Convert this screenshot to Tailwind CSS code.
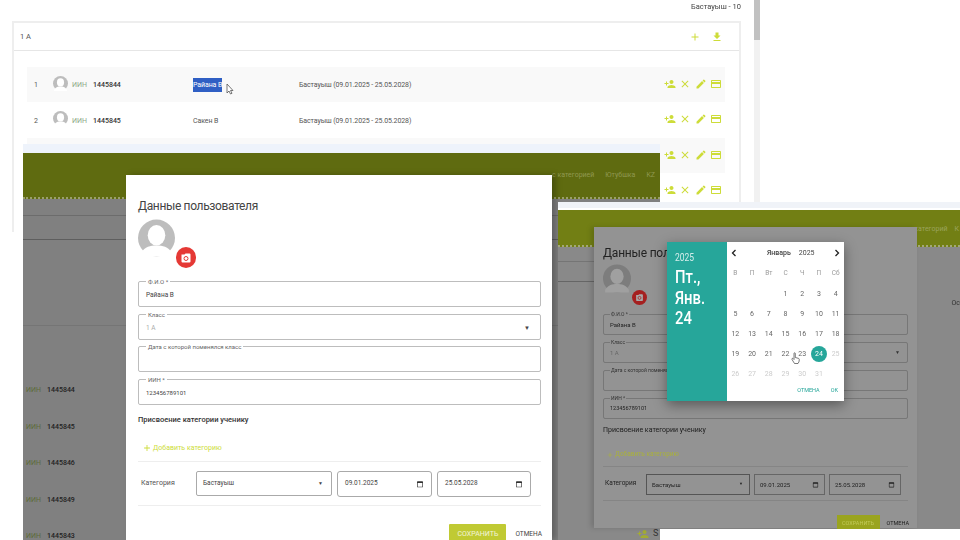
<!DOCTYPE html>
<html lang="ru">
<head>
  <meta charset="UTF-8" />
  <meta name="viewport" content="width=device-width, initial-scale=1.0"/>
  <title>Данные пользователя</title>
  <script src="https://cdn.jsdelivr.net/npm/@tailwindcss/browser@4"></script>
</head>
<body class="bg-white overflow-hidden font-['Roboto',sans-serif]">

<svg class="hidden">
  <symbol id="i-add-user" viewBox="0 0 24 24"><path d="M15 12c2.21 0 4-1.79 4-4s-1.79-4-4-4-4 1.79-4 4 1.79 4 4 4zm-9-2V7H4v3H1v2h3v3h2v-3h3v-2H6zm9 4c-2.67 0-8 1.34-8 4v2h16v-2c0-2.66-5.33-4-8-4z"/></symbol>
  <symbol id="i-close" viewBox="0 0 24 24"><path d="M19 6.41L17.59 5 12 10.59 6.41 5 5 6.41 10.59 12 5 17.59 6.41 19 12 13.41 17.59 19 19 17.59 13.41 12z"/></symbol>
  <symbol id="i-edit" viewBox="0 0 24 24"><path d="M3 17.25V21h3.75L17.81 9.94l-3.75-3.75L3 17.25zM20.71 7.04c.39-.39.39-1.02 0-1.41l-2.34-2.34c-.39-.39-1.02-.39-1.41 0l-1.83 1.83 3.75 3.75 1.83-1.83z"/></symbol>
  <symbol id="i-card" viewBox="0 0 24 24"><path d="M20 4H4c-1.11 0-1.99.89-1.99 2L2 18c0 1.11.89 2 2 2h16c1.11 0 2-.89 2-2V6c0-1.11-.89-2-2-2zm0 14H4v-6h16v6zm0-10H4V6h16v2z"/></symbol>
  <symbol id="i-download" viewBox="0 0 24 24"><path d="M19 9h-4V3H9v6H5l7 7 7-7zM5 18v2h14v-2H5z"/></symbol>
  <symbol id="i-plus" viewBox="0 0 24 24"><path d="M19 13h-6v6h-2v-6H5v-2h6V5h2v6h6v2z"/></symbol>
  <symbol id="i-cal" viewBox="0 0 24 24"><path d="M19 4H5a2 2 0 0 0-2 2v14a2 2 0 0 0 2 2h14a2 2 0 0 0 2-2V6a2 2 0 0 0-2-2zm0 16H5V9h14v11z"/></symbol>
  <symbol id="i-avatar" viewBox="0 0 40 40"><circle cx="20" cy="20" r="20" fill="#bdbdbd"/><ellipse cx="20" cy="17" rx="9.5" ry="11" fill="#fff"/><path d="M3 36c5-7 10-8 17-8s12 1 17 8v4H3z" fill="#fff"/></symbol>
  <symbol id="i-avatar-dim" viewBox="0 0 40 40"><circle cx="20" cy="20" r="20" fill="#7d7d7d"/><ellipse cx="20" cy="17" rx="9.5" ry="11" fill="#a0a0a0"/><path d="M3 36c5-7 10-8 17-8s12 1 17 8v4H3z" fill="#a0a0a0"/></symbol>
</svg>

<div class="relative w-[960px] h-[540px] overflow-hidden blur-[0.5px]">

  <!-- main page behind -->
  <div class="absolute right-[219px] top-[1px] text-[7.500px] leading-[12px] text-[#444]">Бастауыш - 10</div>
  <div class="absolute left-[754px] top-0 w-[6px] h-[202px] bg-[#f1f1f1]"><div class="h-[40px] bg-[#c1c1c1]"></div></div>

  <div class="absolute left-[12px] top-[21px] w-[729px] h-[211px] border-2 border-b-0 border-[#eeeeee] bg-white">
    <div class="h-[28px] flex items-center justify-between border-b border-[#e6e6e6] pl-[6px] pr-[16px] text-[7.500px] text-[#555]">
      <span>1 А</span>
      <div class="flex items-center gap-[10px] text-[#cddc39]">
        <svg class="w-[12px] h-[12px] fill-current"><use href="#i-plus"/></svg>
        <svg class="w-[12px] h-[12px] fill-current"><use href="#i-download"/></svg>
      </div>
    </div>
    <div class="pt-[16px] pl-[13px] pr-[14px] text-[7px] text-[#555]">
      <div class="h-[35px] pt-[2px] flex items-center bg-[#f9f9f9]">
        <span class="w-[26px] pl-[7px]">1</span>
        <svg class="w-[15px] h-[15px] mb-[5px]"><use href="#i-avatar"/></svg>
        <span class="ml-[4px] w-[21px] text-[#8fa98a]">ИИН</span>
        <span class="w-[100px] font-medium text-[#333]">1445844</span>
        <span class="w-[106px] tracking-[-0.1px]"><span class="bg-[#2f5fc4] text-white py-[3px]">Райана В</span></span>
        <span class="flex-1 tracking-[-0.1px]">Бастауыш (09.01.2025 - 25.05.2028)</span>
        <div class="flex items-center gap-[3.500px] pr-[3px] text-[#cddc39] -mt-[4px]">
          <svg class="w-[12px] h-[12px] fill-current"><use href="#i-add-user"/></svg>
          <svg class="w-[12px] h-[12px] fill-current"><use href="#i-close"/></svg>
          <svg class="w-[12px] h-[12px] fill-current"><use href="#i-edit"/></svg>
          <svg class="w-[12px] h-[12px] fill-current"><use href="#i-card"/></svg>
        </div>
      </div>
      <div class="h-[36px] pt-[2px] flex items-center">
        <span class="w-[26px] pl-[7px]">2</span>
        <svg class="w-[15px] h-[15px] mb-[5px]"><use href="#i-avatar"/></svg>
        <span class="ml-[4px] w-[21px] text-[#8fa98a]">ИИН</span>
        <span class="w-[100px] font-medium text-[#333]">1445845</span>
        <span class="w-[106px] tracking-[-0.1px]">Сакен В</span>
        <span class="flex-1 tracking-[-0.1px]">Бастауыш (09.01.2025 - 25.05.2028)</span>
        <div class="flex items-center gap-[3.500px] pr-[3px] text-[#cddc39] -mt-[4px]">
          <svg class="w-[12px] h-[12px] fill-current"><use href="#i-add-user"/></svg>
          <svg class="w-[12px] h-[12px] fill-current"><use href="#i-close"/></svg>
          <svg class="w-[12px] h-[12px] fill-current"><use href="#i-edit"/></svg>
          <svg class="w-[12px] h-[12px] fill-current"><use href="#i-card"/></svg>
        </div>
      </div>
      <div class="h-[35px] flex items-center justify-end bg-[#f9f9f9]">
        <div class="flex items-center gap-[3.500px] pr-[3px] text-[#cddc39] -mt-[2px]">
          <svg class="w-[12px] h-[12px] fill-current"><use href="#i-add-user"/></svg>
          <svg class="w-[12px] h-[12px] fill-current"><use href="#i-close"/></svg>
          <svg class="w-[12px] h-[12px] fill-current"><use href="#i-edit"/></svg>
          <svg class="w-[12px] h-[12px] fill-current"><use href="#i-card"/></svg>
        </div>
      </div>
      <div class="h-[35px] flex items-center justify-end">
        <div class="flex items-center gap-[3.500px] pr-[3px] text-[#cddc39] -mt-[2px]">
          <svg class="w-[12px] h-[12px] fill-current"><use href="#i-add-user"/></svg>
          <svg class="w-[12px] h-[12px] fill-current"><use href="#i-close"/></svg>
          <svg class="w-[12px] h-[12px] fill-current"><use href="#i-edit"/></svg>
          <svg class="w-[12px] h-[12px] fill-current"><use href="#i-card"/></svg>
        </div>
      </div>
    </div>
  </div>

  <!-- mouse pointer over the selected name -->
  <svg class="absolute left-[226px] top-[83px] w-[8px] h-[12px]" viewBox="0 0 8 12"><path d="M1 1v9l2-2 1.500 3 1.500-.7L4.500 7.500H7z" fill="#fff" stroke="#555" stroke-width=".8"/></svg>

  <div class="absolute left-[23px] top-[144px] w-[637px] h-[9px] bg-[#eef3fb]"></div>

  <!-- first window, dimmed by the dialog -->
  <div class="absolute left-[23px] top-[153px] w-[637px] h-[387px] bg-[#808080]">
    <div class="h-[46px] bg-[#5f6b10] border-b-2 border-dotted border-[#9a9f6a] flex justify-end items-center gap-[11px] pr-[5px] pt-[1px] text-[7px] text-[#8f9850]">
      <span>с категорией</span><span>Ютубшка</span><span>KZ</span>
    </div>
    <div class="h-[17px] border-b border-[#6c6c6c]"></div>
    <div class="h-[24px] border-b border-[#5e5e5e]"></div>
    <div class="h-[86px] border-b border-[#757575]"></div>
    <div class="pt-[60px] pl-[3px] flex flex-col gap-[27px] text-[7px] leading-[9.500px] font-medium text-[#222]">
      <div><span class="font-normal text-[#5d6b3a] mr-[6px]">ИИН</span>1445844</div>
      <div><span class="font-normal text-[#5d6b3a] mr-[6px]">ИИН</span>1445845</div>
      <div><span class="font-normal text-[#5d6b3a] mr-[6px]">ИИН</span>1445846</div>
      <div><span class="font-normal text-[#5d6b3a] mr-[6px]">ИИН</span>1445849</div>
      <div><span class="font-normal text-[#5d6b3a] mr-[6px]">ИИН</span>1445843</div>
    </div>
  </div>

  <!-- first dialog -->
  <div class="absolute left-[126px] top-[175px] w-[426px] h-[365px] bg-white shadow-[4px_0_6px_rgba(0,0,0,0.25)] px-[12px]">
    <h2 class="pt-[23px] text-[12px] leading-[16px] tracking-[-0.35px] text-[#444]">Данные пользователя</h2>
    <div class="relative h-[59px] mt-[5px]">
      <svg class="w-[37px] h-[38px]"><use href="#i-avatar"/></svg>
      <div class="absolute left-[38px] top-[28px] w-[20px] h-[21px] rounded-full bg-[#e53935] flex items-center justify-center">
        <svg class="w-[12px] h-[12px]" viewBox="0 0 24 24"><path d="M3 5h6l2-2h8a2 2 0 0 1 2 2v14a2 2 0 0 1-2 2H5a2 2 0 0 1-2-2z" fill="#fff"/><circle cx="12" cy="13" r="4" fill="none" stroke="#e53935" stroke-width="2"/></svg>
      </div>
    </div>
    <div class="w-[403px] flex flex-col gap-[3.500px]">
      <fieldset class="h-[29px] border border-[#bdbdbd] rounded-[2px] px-[7px]">
        <legend class="text-[6px] leading-[7px] px-[2px] text-[#666]">Ф.И.О *</legend>
        <div class="text-[6.500px] leading-[20px] text-[#444]">Райана В</div>
      </fieldset>
      <fieldset class="h-[29px] border border-[#bdbdbd] rounded-[2px] pl-[7px] pr-[10px]">
        <legend class="text-[6px] leading-[7px] px-[2px] text-[#666]">Класс</legend>
        <div class="flex items-center justify-between text-[6.500px] leading-[20px] text-[#aaa]"><span>1 А</span><span class="text-[6px] text-[#444]">▼</span></div>
      </fieldset>
      <fieldset class="h-[29px] border border-[#bdbdbd] rounded-[2px] px-[7px]">
        <legend class="text-[6px] leading-[7px] px-[2px] text-[#666]">Дата с которой поменялся класс</legend>
      </fieldset>
      <fieldset class="h-[29px] border border-[#bdbdbd] rounded-[2px] px-[7px]">
        <legend class="text-[6px] leading-[7px] px-[2px] text-[#666]">ИИН *</legend>
        <div class="text-[6px] leading-[20px] text-[#444]">123456789101</div>
      </fieldset>
    </div>
    <div class="pt-[10px] text-[7.500px] leading-[10px] font-medium text-[#333]">Присвоение категории ученику</div>
    <div class="pt-[18px] pl-[4px] pb-[8px] flex items-center gap-[1px] w-[403px] border-b border-[#eeeeee] text-[7px] leading-[10px] text-[#cddc39]">
      <svg class="w-[10px] h-[10px] fill-current"><use href="#i-plus"/></svg><span>Добавить категорию</span>
    </div>
    <div class="w-[403px] h-[44px] pt-[1px] flex items-center border-b border-[#eeeeee] text-[6.500px] text-[#444]">
      <span class="w-[58px] pl-[3px] text-[7px] text-[#555]">Категория</span>
      <div class="w-[136px] h-[25px] border border-[#aaa] rounded-[2px] flex items-center justify-between pl-[6px] pr-[8px]"><span>Бастауыш</span><span class="text-[5px]">▼</span></div>
      <div class="ml-[5px] w-[95px] h-[26px] border border-[#aaa] rounded-[3px] flex items-center justify-between pl-[7px] pr-[7px]"><span>09.01.2025</span><svg class="w-[8px] h-[8px] fill-[#333]"><use href="#i-cal"/></svg></div>
      <div class="ml-[5px] w-[94px] h-[26px] border border-[#aaa] rounded-[3px] flex items-center justify-between pl-[7px] pr-[7px]"><span>25.05.2028</span><svg class="w-[8px] h-[8px] fill-[#333]"><use href="#i-cal"/></svg></div>
    </div>
    <div class="w-[404px] pt-[18px] flex justify-end items-start gap-[9px]">
      <div class="w-[57px] h-[20px] rounded-[1px] bg-[#c0ca33] text-white/80 text-[7px] text-center leading-[20px]">СОХРАНИТЬ</div>
      <div class="pt-[5px] text-[6.500px] leading-[10px] text-[#444]">ОТМЕНА</div>
    </div>
  </div>

  <!-- second window, same page a step later -->
  <div class="absolute left-[558px] top-[202px] w-[402px] h-[338px] bg-[#898989]">
    <div class="h-[6px] bg-[#f0f3f8]"></div>
    <div class="h-[2px] bg-white"></div>
    <div class="h-[37px] bg-[#727f14] border-b-2 border-dotted border-[#a3a878] flex justify-end pr-[1px] pt-[14px] text-[7px] leading-[10px] text-[#9aa35c]">
      <span>т категорий</span><span class="ml-[7px]">К</span>
    </div>
    <div class="h-[15px] border-b border-[#757575] w-[36px]"></div>
    <div class="h-[20px] border-b border-[#666] w-[36px]"></div>
    <div class="absolute right-0 top-[96px] text-[7px] text-[#333]">Ос</div>
    <div class="absolute left-[79px] top-[325px] flex items-center gap-[3px] text-[9px] text-[#333]">
      <svg class="w-[12px] h-[12px] fill-[#a3ac33]"><use href="#i-add-user"/></svg><span class="ml-[1px]">S</span>
    </div>
  </div>

  <!-- second dialog, dimmed -->
  <div class="absolute left-[594px] top-[227px] w-[323px] h-[301px] bg-[#939393] px-[9px] shadow-[-3px_0_5px_rgba(0,0,0,0.15)]">
    <h2 class="pt-[18px] text-[12px] leading-[16px] tracking-[-0.2px] text-[#222]">Данные пользо</h2>
    <div class="relative h-[46px] mt-[3px]">
      <svg class="w-[28px] h-[29px]"><use href="#i-avatar-dim"/></svg>
      <div class="absolute left-[29px] top-[26px] w-[15px] h-[15px] rounded-full bg-[#a52020] flex items-center justify-center">
        <svg class="w-[9px] h-[9px]" viewBox="0 0 24 24"><path d="M3 5h6l2-2h8a2 2 0 0 1 2 2v14a2 2 0 0 1-2 2H5a2 2 0 0 1-2-2z" fill="#a9a9a9"/><circle cx="12" cy="13" r="4" fill="none" stroke="#a52020" stroke-width="2"/></svg>
      </div>
    </div>
    <div class="w-[305px] flex flex-col gap-[4px] mt-[1px]">
      <fieldset class="h-[24px] border border-[#777] rounded-[2px] px-[6px]">
        <legend class="text-[5px] leading-[6px] px-[1px] text-[#333]">Ф.И.О *</legend>
        <div class="text-[6px] leading-[15px] text-[#222]">Райана В</div>
      </fieldset>
      <fieldset class="h-[24px] border border-[#777] rounded-[2px] pl-[6px] pr-[7px]">
        <legend class="text-[5px] leading-[6px] px-[1px] text-[#333]">Класс</legend>
        <div class="flex items-center justify-between text-[6px] leading-[15px] text-[#666]"><span>1 А</span><span class="text-[5px] text-[#333]">▼</span></div>
      </fieldset>
      <fieldset class="h-[24px] border border-[#777] rounded-[2px] px-[6px]">
        <legend class="text-[5px] leading-[6px] px-[1px] text-[#333]">Дата с которой поменялся класс</legend>
      </fieldset>
      <fieldset class="h-[24px] border border-[#777] rounded-[2px] px-[6px]">
        <legend class="text-[5px] leading-[6px] px-[1px] text-[#333]">ИИН *</legend>
        <div class="text-[5.500px] leading-[15px] text-[#222]">123456789101</div>
      </fieldset>
    </div>
    <div class="pt-[7px] text-[7px] leading-[9px] text-[#1c1c1c]">Присвоение категории ученику</div>
    <div class="pt-[15px] pl-[3px] pb-[7px] flex items-center gap-[1px] w-[305px] border-b border-[#858585] text-[6.500px] leading-[9px] text-[#aab13c]">
      <svg class="w-[8px] h-[8px] fill-current"><use href="#i-plus"/></svg><span>Добавить категорию</span>
    </div>
    <div class="w-[305px] h-[34px] pt-[1px] flex items-center border-b border-[#858585] text-[6px] text-[#222]">
      <span class="w-[43px] pl-[2px] text-[6.500px]">Категория</span>
      <div class="w-[104px] h-[21px] border border-[#555] flex items-center justify-between pl-[5px] pr-[6px]"><span>Бастауыш</span><span class="text-[4px]">▼</span></div>
      <div class="ml-[4px] w-[71px] h-[21px] border border-[#666] flex items-center justify-between pl-[5px] pr-[5px]"><span>09.01.2025</span><svg class="w-[7px] h-[7px] fill-[#222]"><use href="#i-cal"/></svg></div>
      <div class="ml-[4px] w-[72px] h-[21px] border border-[#666] flex items-center justify-between pl-[5px] pr-[5px]"><span>25.05.2028</span><svg class="w-[7px] h-[7px] fill-[#222]"><use href="#i-cal"/></svg></div>
    </div>
    <div class="w-[306px] pt-[14px] flex justify-end items-start gap-[7px]">
      <div class="w-[43px] h-[16px] bg-[#9aa41f] text-[#c2ca5a] text-[5.500px] text-center leading-[16px]">СОХРАНИТЬ</div>
      <div class="pt-[4px] text-[5.500px] leading-[8px] text-[#1c1c1c]">ОТМЕНА</div>
    </div>
  </div>

  <!-- date picker -->
  <div class="absolute left-[667px] top-[242px] w-[177px] h-[159px] flex bg-white shadow-[0_4px_12px_rgba(0,0,0,0.4)]">
    <div class="w-[60px] bg-[#26a69a] text-white pl-[8px] pt-[10px]">
      <div class="text-[10px] leading-[12px] text-white/80 scale-x-[0.85] origin-left">2025</div>
      <div class="mt-[3px] text-[19px] leading-[20.500px] font-medium scale-x-[0.78] origin-left">Пт.,<br>Янв.<br>24</div>
    </div>
    <div class="flex-1 flex flex-col text-[7px] text-[#666]">
      <div class="h-[22px] flex items-center px-[4px] text-[#444]">
        <svg class="w-[6px] h-[8px]" viewBox="0 0 6 8"><path d="M4.500 1L1.500 4l3 3" fill="none" stroke="#222" stroke-width="1.300"/></svg>
        <span class="ml-[30px] font-medium">Январь</span>
        <span class="ml-[8px]">2025</span>
        <svg class="ml-auto w-[6px] h-[8px]" viewBox="0 0 6 8"><path d="M1.500 1l3 3-3 3" fill="none" stroke="#222" stroke-width="1.300"/></svg>
      </div>
      <div class="grid grid-cols-7 auto-rows-[20px] items-center justify-items-center text-[7px]">
        <span class="text-[6.500px] text-[#999]">В</span><span class="text-[6.500px] text-[#999]">П</span><span class="text-[6.500px] text-[#999]">Вт</span><span class="text-[6.500px] text-[#999]">С</span><span class="text-[6.500px] text-[#999]">Ч</span><span class="text-[6.500px] text-[#999]">П</span><span class="text-[6.500px] text-[#999]">Сб</span>
        <span></span><span></span><span></span><span>1</span><span>2</span><span>3</span><span>4</span>
        <span>5</span><span>6</span><span>7</span><span>8</span><span>9</span><span>10</span><span>11</span>
        <span>12</span><span>13</span><span>14</span><span>15</span><span>16</span><span>17</span><span>18</span>
        <span>19</span><span>20</span><span>21</span><span>22</span><span>23</span>
        <span class="w-[16px] h-[16px] rounded-full bg-[#26a69a] text-white text-center leading-[16px]">24</span>
        <span class="text-[#ccc]">25</span>
        <span class="text-[#ccc]">26</span><span class="text-[#ccc]">27</span><span class="text-[#ccc]">28</span><span class="text-[#ccc]">29</span><span class="text-[#ccc]">30</span><span class="text-[#ccc]">31</span><span></span>
      </div>
      <div class="flex justify-end gap-[11px] pr-[6px] pt-[2px] text-[5.500px] text-[#26a69a]"><span>ОТМЕНА</span><span>ОК</span></div>
    </div>
  </div>

  <!-- hand pointer on the calendar -->
  <svg class="absolute left-[791px] top-[352px] w-[9px] h-[12px]" viewBox="0 0 9 12"><path d="M3 1.500c0-1 1.300-1 1.300 0v4l3 .8c.8.2 1 .7 1 1.400 0 1.500-.5 3-1.300 3.800H3.500L1 7.500c-.5-.8.400-1.500 1-1l1 1z" fill="#fff" stroke="#444" stroke-width=".7"/></svg>

  <div class="absolute left-[660px] top-[529px] w-[300px] h-[11px] bg-white"></div>
</div>

</body>
</html>
